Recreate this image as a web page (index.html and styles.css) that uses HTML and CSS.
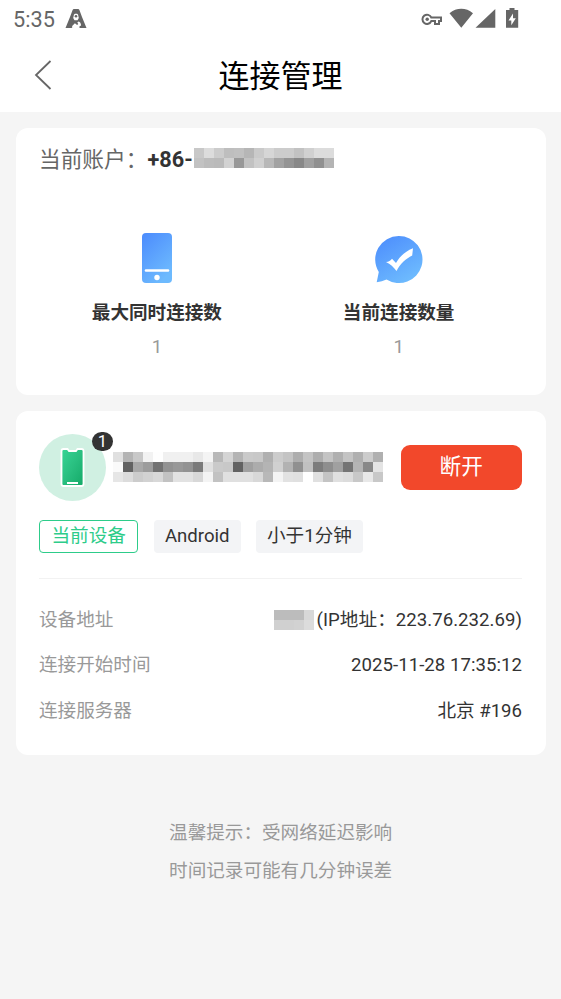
FILE: index.html
```html
<!DOCTYPE html>
<html lang="zh-CN">
<head>
<meta charset="utf-8">
<title>连接管理</title>
<link rel="stylesheet" href="styles.css">
</head>
<body>
<header class="top">
  <div class="status">
    <span class="clock">5:35</span>
    <svg class="app-icon" width="22" height="20" viewBox="0 0 22 20"><path fill="#666" fill-rule="evenodd" d="M9 0h4q1 0 1.500 1.200L17 8l4.500 11H14.500v-1.800l1.600-.8c-.2-2.200-1-3.600-2.500-4l-1.300 1.200 1 1.400-1.200 1-2.200-1.800-2.500 2.500-.6 2 1.700.4V19H.5L5 8l2.500-6.800Q8 0 9 0zM9 5.500L8.200 9l1.300 2.300h3L13.800 9 13 5.500l-1-.7h-2z"/><circle cx="11" cy="7.300" r="1.300" fill="#666"/></svg>
    <svg class="system" width="98" height="22" viewBox="0 0 98 22">
      <g fill="none" stroke="#666" stroke-width="2"><path d="M10.300 9.500H20v3.600h-2V16h-4v-2.900h-3.700A4.600 4.600 0 1 1 10.300 9.500z"/></g>
      <circle cx="6.200" cy="11.300" r="1.700" fill="#666"/>
      <path fill="#666" d="M28.500 5.200C35.500-.6 45-.6 52 5.200L40.300 19.700zM74.300 1v18.700H54.500z"/>
      <path fill="#666" fill-rule="evenodd" d="M88.500 0h5v2h3.700v17.800H85V2h3.500zM92 5.500l-4.500 7h2.800v4.800l4.500-7H92z"/>
    </svg>
  </div>
  <div class="nav">
    <svg class="back" width="18" height="30" viewBox="0 0 18 30"><path d="M16.500 1L2 15l14.500 14" fill="none" stroke="#666" stroke-width="1.800"/></svg>
    <h1>连接管理</h1>
  </div>
</header>
<main>
  <section class="card account">
    <div class="account-row"><span>当前账户：</span><b>+86-</b><svg class="mosaic" data-rows="c8dcccbec0b6cad6ccccc2d0dcdc c2bcbad298c2d0b8a29488a090b4"></svg></div>
    <div class="stats">
      <div class="stat">
        <svg width="50" height="52" viewBox="0 0 50 52"><defs><linearGradient id="blue" x1="0" y1="0" x2=".6" y2="1"><stop stop-color="#4b8bfd"/><stop offset="1" stop-color="#6dbafe"/></linearGradient></defs><rect x="10" y="1" width="30" height="50" rx="4" fill="url(#blue)"/><path d="M14 38.500h22" stroke="#fff" stroke-width="2.600" stroke-linecap="round"/><circle cx="25" cy="45.500" r="2.700" fill="#fff"/></svg>
        <strong>最大同时连接数</strong><span>1</span>
      </div>
      <div class="stat">
        <svg width="50" height="52" viewBox="0 0 50 52"><path fill="url(#blue)" d="M25 4a23.500 23.500 0 1 1-12.500 43.400Q8 49.500 2.700 50.300L4.800 40A23.500 23.500 0 0 1 25 4z"/><path fill="#fff" d="M12 30q4-.2 6-3.300l4 4.300c4-6.800 9-11.500 17-14.700l-.8 7.200C32 26.500 26.500 31.500 22.500 39c-3-3.800-6-6.900-10.500-9z"/></svg>
        <strong>当前连接数量</strong><span>1</span>
      </div>
    </div>
  </section>
  <section class="card device">
    <div class="device-head">
      <div class="avatar">
        <svg width="67" height="67" viewBox="0 0 67 67"><defs><linearGradient id="green" x2="1" y2="1"><stop stop-color="#38d596"/><stop offset=".5" stop-color="#29bf80"/><stop offset="1" stop-color="#13a967"/></linearGradient></defs><circle cx="33.500" cy="33.500" r="33.500" fill="#d0f0e2"/><path d="M24.500 15h4l1.500 2h7l1.500-2h4q2 0 2 2v33q0 2-2 2h-18q-2 0-2-2V17q0-2 2-2z" fill="url(#green)" stroke="#fff" stroke-width="1.800"/><path d="M28 49h11" stroke="#fff" stroke-width="2"/></svg>
        <span class="badge">1</span>
      </div>
      <svg class="mosaic name" data-rows="e0b4c8f2fef0f0f0e8f4b8d4b4cac8b0ccc4aec4aec4b0c4b0ccb0 fa62a89c729298927ae0cac862a0acb4d0b290c07c8ea074b488e4 e6dcccd2d8c2e2e2d8f4c2e0e0e0d8b8f4e2e0ffe0c4e0dcc8e8c8"></svg>
      <button>断开</button>
    </div>
    <div class="tags"><span class="tag current">当前设备</span><span class="tag">Android</span><span class="tag">小于1分钟</span></div>
    <dl>
      <div><dt>设备地址</dt><dd><svg class="mosaic" data-rows="bcbcbcd8 d0d0d2dc"></svg><span class="ip">(IP地址：223.76.232.69)</span></dd></div>
      <div><dt>连接开始时间</dt><dd class="time">2025-11-28 17:35:12</dd></div>
      <div><dt>连接服务器</dt><dd>北京 #196</dd></div>
    </dl>
  </section>
  <p class="hint">温馨提示：受网络延迟影响<br>时间记录可能有几分钟误差</p>
</main>
<script src="mosaic.js"></script>
</body>
</html>
```
FILE: styles.css
```css
* { box-sizing: border-box; }
body { margin: 0; height: 999px; overflow: hidden; background: #f5f5f5; color: #333; font: 18.6px/28px Roboto, "Noto Sans CJK SC", sans-serif; }
svg { display: block; flex: none; }
.top { height: 112px; background: #fff; }
.status { height: 38px; display: flex; align-items: center; padding: 0 42.5px 0 13px; color: #666; }
.clock { font-size: 21.7px; width: 52px; padding-top: 2px; }
.system { margin-left: auto; }
.nav { height: 74px; display: grid; grid-template-columns: 1fr auto 1fr; align-items: center; padding: 0 34px; }
h1 { margin: 0; padding-top: 4px; font-size: 31px; line-height: 44px; font-weight: 400; color: #000; }
main { padding: 16px 15.4px 16px 15.6px; }
.card { background: #fff; border-radius: 12px; padding: 0 23.6px 0 23.4px; }
.account { height: 267px; padding-top: 15px; }
.account-row { display: flex; align-items: center; height: 30px; font-size: 21.7px; color: #666; }
.account-row span, .account-row b { padding-top: 4px; }
.account-row b { color: #333; margin-right: 1px; }
.stats { display: grid; grid-template-columns: 1fr 1fr; margin: 59px 2.5px 0 -3px; }
.stat { display: flex; flex-direction: column; align-items: center; }
.stat strong { margin-top: 15px; }
.stat span { color: #999; margin-top: 6px; }
.device { height: 344.5px; margin-top: 15.5px; padding-top: 23.5px; }
.device-head { display: flex; align-items: center; height: 67px; }
.avatar { position: relative; width: 67px; height: 67px; }
.badge { position: absolute; left: 53px; top: -2px; width: 21px; height: 19px; border-radius: 10px; background: #333; color: #fff; font-size: 16.500px; line-height: 19px; text-align: center; }
.name { margin: 0 0 2px 7px; }
button { margin-left: auto; width: 121.5px; height: 45px; padding: 0 0 1px; border: 0; border-radius: 9px; background: #f2482b; color: #fff; font: inherit; font-size: 21.7px; }
.tags { display: flex; gap: 15.5px; margin-top: 18.5px; }
.tag { height: 33px; line-height: 32px; padding: 0 11px; border-radius: 4px; background: #f3f4f6; }
.current { padding: 0 11.5px; line-height: 31px; border: 1.5px solid #2dcc8a; background: #fff; color: #2dcc8a; }
dl { margin: 25px 0 0; padding-top: 19px; border-top: 1px solid #f2f2f2; }
dl div { display: flex; justify-content: space-between; align-items: center; height: 45.3px; }
dt { color: #999; }
dd { margin: 0; display: flex; align-items: center; }
.ip { margin-left: 2.7px; letter-spacing: .04px; }
.time { letter-spacing: .04px; }
.hint { margin: 60px 0 0; text-align: center; color: #999; line-height: 37.700px; }
```
FILE: mosaic.js
```javascript
// Each pair of hex digits is the grey level of one 10px tile.
document.querySelectorAll('.mosaic').forEach(function (svg) {
  var rows = svg.dataset.rows.split(' ');
  svg.setAttribute('width', rows[0].length * 5);
  svg.setAttribute('height', rows.length * 10);
  rows.forEach(function (row, y) {
    row.match(/../g).forEach(function (grey, x) {
      var tile = document.createElementNS('http://www.w3.org/2000/svg', 'rect');
      tile.setAttribute('x', x * 10);
      tile.setAttribute('y', y * 10);
      tile.setAttribute('width', 10);
      tile.setAttribute('height', 10);
      tile.setAttribute('fill', '#' + grey + grey + grey);
      svg.appendChild(tile);
    });
  });
});
```
